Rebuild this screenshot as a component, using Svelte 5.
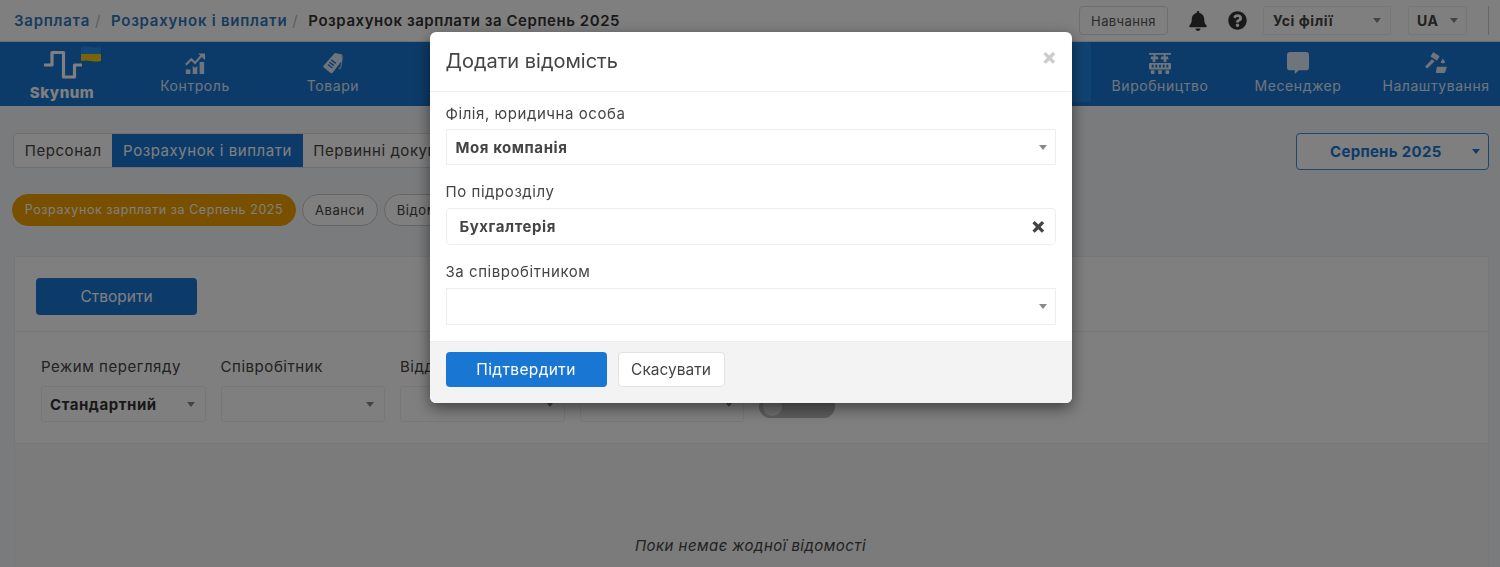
<script lang="ts">
    const navLeft = [
        { label: 'Контроль', icon: 'chart' },
        { label: 'Товари', icon: 'tag' }
    ];
    const navRight = [
        { label: 'Виробництво', icon: 'factory' },
        { label: 'Месенджер', icon: 'chat' },
        { label: 'Налаштування', icon: 'tools' }
    ];
    const filters = [
        { label: 'Режим перегляду', value: 'Стандартний' },
        { label: 'Співробітник', value: '' },
        { label: 'Відділ', value: '' },
        { label: 'Посада', value: '' }
    ];
</script>

{#snippet navIcon(name: string)}
    {#if name === 'chart'}
        <svg class="nav-icon" viewBox="0 0 24 24">
            <path d="M2 24v-5h5v5zM9.500 24v-9l2.500 2.500 2.500-2.500v9zM17 24V11h5v13z" />
            <path d="M2 14l6-6 4 4 7-8" fill="none" stroke="currentColor" stroke-width="2.400" />
            <path d="M15.500 1.500H23v7.500z" />
        </svg>
    {:else if name === 'tag'}
        <svg class="nav-icon" viewBox="0 0 24 24">
            <path fill-rule="evenodd" d="M14 1l7 1.500 1 6.500-10.500 13.500a1.500 1.500 0 0 1-2 .3L2 17a1.500 1.500 0 0 1-.3-2.100zM8.500 10.500l-.9 1.200 5 3.800.9-1.200zM6.800 13l-.9 1.200 5 3.800.9-1.200zM10.500 8l-.9 1.200 5 3.800.9-1.200z" />
            <path d="M19 4c2-3 3.500 0 3 3l-1.500 10c-.3 2-2 2-2 0" fill="none" stroke="currentColor" stroke-width="1" />
        </svg>
    {:else if name === 'factory'}
        <svg class="nav-icon" viewBox="0 0 24 24">
            <path d="M0 1h24v2H0zM5 3h2v2H5zM16 3h2v2h-2zM2.500 5h7l1 3H1.500zM13.500 5h7l1 3h-9zM4 8h3v3H4zM16 8h3v3h-3z" />
            <path fill-rule="evenodd" d="M1 12h22a1 1 0 0 1 1 1v5a1 1 0 0 1-1 1H1a1 1 0 0 1-1-1v-5a1 1 0 0 1 1-1zm2 2v3h2v-3zm4 0v3h2v-3zm4 0v3h2v-3zm4 0v3h2v-3zm4 0v3h2v-3z" />
            <path d="M2 20h4v2.500a1.500 1.500 0 0 1-4 0zM10 20h4v2.500a1.500 1.500 0 0 1-4 0zM18 20h4v2.500a1.500 1.500 0 0 1-4 0z" />
        </svg>
    {:else if name === 'chat'}
        <svg class="nav-icon" viewBox="0 0 24 24">
            <path d="M3.500 0h17A3.500 3.500 0 0 1 24 3.500v13a3.500 3.500 0 0 1-3.500 3.500H13l-4.500 4v-4h-5A3.500 3.500 0 0 1 0 16.500v-13A3.500 3.500 0 0 1 3.500 0z" />
        </svg>
    {:else}
        <svg class="nav-icon" viewBox="0 0 24 24">
            <path d="M9 0l7 4.500-3 5-7-4.500zM7.500 8l3 2L2.500 18 0 16z" />
            <path d="M19.500 7l2.500 4a2.800 2.800 0 0 1-5 0zM13 16h11l-2 6a2 2 0 0 1-1.500 1H13.500a1.500 1.500 0 0 1-1.500-2z" />
        </svg>
    {/if}
{/snippet}

{#snippet caret()}
    <span class="caret"></span>
{/snippet}

<div class="page">
    <header class="topbar">
        <nav class="crumbs">
            <a href="#a">Зарплата</a><span class="sep">/</span>
            <a href="#b">Розрахунок і виплати</a><span class="sep">/</span>
            <strong>Розрахунок зарплати за Серпень 2025</strong>
        </nav>
        <div class="top-actions">
            <button class="learn">Навчання</button>
            <svg class="bell" viewBox="0 0 448 512"><path d="M224 512c35.320 0 63.970-28.650 63.970-64H160.030c0 35.350 28.650 64 63.970 64zm215.390-149.710c-19.320-20.760-55.470-51.990-55.470-154.290 0-77.700-54.480-139.900-127.940-155.160V32c0-17.670-14.320-32-31.980-32s-31.980 14.330-31.980 32v20.840C118.560 68.100 64.080 130.300 64.080 208c0 102.300-36.150 133.530-55.470 154.290-6 6.450-8.660 14.160-8.610 21.710.11 16.400 12.980 32 32.100 32h383.800c19.120 0 32-15.600 32.100-32 .05-7.550-2.610-15.270-8.610-21.710z" /></svg>
            <svg class="help" viewBox="0 0 512 512"><path d="M504 256c0 136.997-111.043 248-248 248S8 392.997 8 256C8 119.083 119.043 8 256 8s248 111.083 248 248zM262.655 90c-54.497 0-89.255 22.957-116.549 63.758-3.536 5.286-2.353 12.415 2.715 16.258l34.699 26.310c5.205 3.947 12.621 3.008 16.665-2.122 17.864-22.658 30.113-35.797 57.303-35.797 20.429 0 45.698 13.148 45.698 32.958 0 14.976-12.363 22.667-32.534 33.976C247.128 238.528 216 254.941 216 296v4c0 6.627 5.373 12 12 12h56c6.627 0 12-5.373 12-12v-1.333c0-28.462 83.186-29.647 83.186-106.667 0-58.002-60.165-102-116.531-102zM256 338c-25.365 0-46 20.635-46 46 0 25.364 20.635 46 46 46s46-20.636 46-46c0-25.365-20.635-46-46-46z" /></svg>
            <div class="top-select branch"><b>Усі філії</b>{@render caret()}</div>
            <div class="top-select lang"><b>UA</b>{@render caret()}</div>
            <span class="top-divider"></span>
        </div>
    </header>

    <nav class="mainnav">
        <div class="logo">
            <svg class="logo-mark" viewBox="0 0 60 36">
                <path d="M3 20h8V7.500h11.500V32H33.500V20H41" fill="none" stroke="#fff" stroke-width="3.200" stroke-linejoin="round" />
                <path d="M40 2c7-2 13 2 20 0v7H40z" fill="#2590ee" />
                <path d="M40 9h20v7c-7 2-13-2-20 0z" fill="#f6c90e" />
            </svg>
            <span>Skynum</span>
        </div>
        {#each navLeft as item}
            <a class="nav-item" href="#n">{@render navIcon(item.icon)}<span>{item.label}</span></a>
        {/each}
        <span class="nav-fill"></span>
        <span class="nav-current"></span>
        {#each navRight as item}
            <a class="nav-item" href="#n">{@render navIcon(item.icon)}<span>{item.label}</span></a>
        {/each}
    </nav>

    <main class="content">
        <div class="tabs-row">
            <div class="tabs">
                <span class="tab">Персонал</span>
                <span class="tab active">Розрахунок і виплати</span>
                <span class="tab">Первинні документи</span>
            </div>
            <div class="period"><span>Серпень 2025</span><i></i></div>
        </div>

        <div class="pills">
            <span class="pill current">Розрахунок зарплати за Серпень 2025</span>
            <span class="pill">Аванси</span>
            <span class="pill">Відомості</span>
        </div>

        <section class="card">
            <div class="card-head">
                <button class="create">Створити</button>
            </div>
            <div class="filters">
                {#each filters as f}
                    <div class="filter">
                        <span class="filter-label">{f.label}</span>
                        <div class="filter-select"><b>{f.value}</b>{@render caret()}</div>
                    </div>
                {/each}
                <span class="toggle"><i></i></span>
            </div>
            <div class="empty">Поки немає жодної відомості</div>
        </section>
    </main>
</div>

<div class="overlay">
    <div class="modal">
        <div class="modal-head">
            <h2>Додати відомість</h2>
            <span class="close">×</span>
        </div>
        <div class="modal-body">
            <div class="field first">
                <span class="field-label">Філія, юридична особа</span>
                <div class="field-select square"><b>Моя компанія</b>{@render caret()}</div>
            </div>
            <div class="field">
                <span class="field-label">По підрозділу</span>
                <div class="field-select chosen"><b>Бухгалтерія</b><span class="clear">×</span></div>
            </div>
            <div class="field">
                <span class="field-label">За співробітником</span>
                <div class="field-select square"><b></b>{@render caret()}</div>
            </div>
        </div>
        <div class="modal-foot">
            <button class="confirm">Підтвердити</button>
            <button class="cancel">Скасувати</button>
        </div>
    </div>
</div>

<style>
    :global(body) {
        margin: 0;
        background: #f4f6f9;
        overflow: hidden;
    }

    .page {
        height: 567px;
        overflow: hidden;
        font-family: Inter, "Open Sans", sans-serif;
        letter-spacing: 0.035em;
        color: #444;
    }

    .topbar {
        height: 41px;
        background: #fff;
        border-bottom: 1px solid #ddd;
        display: flex;
        align-items: center;
        justify-content: space-between;
        padding-left: 14px;
    }

    .crumbs {
        font-size: 15px;
        font-weight: 600;
        display: flex;
        align-items: center;
        white-space: nowrap;
    }

    .crumbs a {
        color: #2c77bd;
        text-decoration: none;
        letter-spacing: 0.05em;
    }

    .crumbs strong {
        color: #333;
        font-weight: 600;
    }

    .sep {
        color: #bbb;
        font-weight: 400;
        margin: 0 10px 0 5px;
    }

    .top-actions {
        display: flex;
        align-items: center;
        height: 29px;
        padding-right: 11px;
    }

    .learn {
        width: 89px;
        height: 29px;
        background: #fff;
        border: 1px solid #ddd;
        border-radius: 4px;
        font: inherit;
        font-size: 13px;
        letter-spacing: 0.03em;
        color: #555;
        padding: 0;
    }

    .bell {
        width: 18px;
        height: 20px;
        margin-left: 21px;
        fill: #333;
    }

    .help {
        width: 19px;
        height: 19px;
        margin-left: 21px;
        fill: #333;
    }

    .top-select {
        height: 29px;
        box-sizing: border-box;
        border: 1px solid #eee;
        border-radius: 2px;
        display: flex;
        align-items: center;
        justify-content: space-between;
        font-size: 14px;
        color: #444;
    }

    .branch {
        width: 128px;
        margin-left: 16px;
        padding: 0 9px;
    }

    .lang {
        width: 59px;
        margin-left: 17px;
        padding: 0 8px;
    }

    .top-divider {
        width: 1px;
        height: 29px;
        background: #ccc;
        margin-left: 21px;
    }

    .caret {
        width: 0;
        height: 0;
        border-left: 4.500px solid transparent;
        border-right: 4.500px solid transparent;
        border-top: 5px solid #888;
    }

    .mainnav {
        height: 64px;
        background: #1976d2;
        display: flex;
        color: #fff;
        overflow: hidden;
    }

    .logo {
        width: 124px;
        margin-right: 2px;
        flex: none;
        display: flex;
        flex-direction: column;
        align-items: center;
        font-weight: 800;
        font-size: 15px;
    }

    .logo-mark {
        width: 60px;
        height: 36px;
        margin: 3px 0 0 18px;
    }

    .logo span {
        margin-top: 2px;
    }

    .nav-item {
        width: 138px;
        flex: none;
        display: flex;
        flex-direction: column;
        align-items: center;
        text-decoration: none;
        color: #fff;
        font-size: 14px;
        opacity: 0.85;
        white-space: nowrap;
    }

    .nav-item span {
        margin-top: 3px;
    }

    .nav-icon {
        width: 22px;
        height: 22px;
        margin-top: 10px;
        fill: currentColor;
    }

    .nav-fill {
        flex: 1;
    }

    /* sits behind the dialog, only its last 19px show */
    .nav-current {
        width: 138px;
        flex: none;
        height: 60px;
        background: #2287e4;
    }

    .nav-item:last-child {
        margin-right: -5px;
    }

    .content {
        padding: 27px 11px 0 12px;
    }

    .tabs-row {
        display: flex;
        justify-content: space-between;
        align-items: flex-start;
    }

    .tabs {
        display: flex;
        height: 35px;
        margin-left: 1px;
        box-sizing: border-box;
        border: 1px solid #ddd;
        border-radius: 4px;
        background: #fff;
        font-size: 15px;
    }

    .tab {
        padding: 0 10.700px;
        line-height: 33px;
        white-space: nowrap;
    }

    .tab.active {
        background: #1976d2;
        color: #fff;
    }

    .period {
        width: 193px;
        height: 37px;
        box-sizing: border-box;
        border: 1px solid #3f8fdc;
        border-radius: 4px;
        background: #fff;
        display: flex;
        align-items: center;
        color: #1976d2;
        font-weight: 700;
        font-size: 15px;
        letter-spacing: 0.02em;
        padding: 0 8px 0 33px;
        justify-content: space-between;
    }

    .period i {
        width: 0;
        height: 0;
        border-left: 4px solid transparent;
        border-right: 4px solid transparent;
        border-top: 5px solid #1976d2;
    }

    .pills {
        display: flex;
        gap: 6px;
        margin-top: 24px;
    }

    .pill {
        height: 32px;
        box-sizing: border-box;
        border: 1px solid #ccc;
        border-radius: 16px;
        padding: 0 12px;
        line-height: 30px;
        font-size: 13px;
        background: #fff;
        white-space: nowrap;
    }

    .pill.current {
        width: 284px;
        background: #f0a000;
        border-color: #f0a000;
        color: #fff;
        font-size: 12.500px;
        text-align: center;
        padding: 0;
    }

    .card {
        margin: 30px 0 0 2px;
        border: 1px solid #eee;
        background: #f6f6f6;
        height: 320px;
    }

    .card-head {
        height: 75px;
        background: #fff;
        border-bottom: 1px solid #eee;
        box-sizing: border-box;
        padding: 21px 0 0 21px;
    }

    .create {
        width: 161px;
        height: 37px;
        border: 0;
        border-radius: 4px;
        background: #1976d2;
        color: #fff;
        font: inherit;
        font-size: 15.500px;
        padding: 0;
    }

    .filters {
        height: 112px;
        background: #fff;
        border-bottom: 1px solid #eee;
        box-sizing: border-box;
        display: flex;
        gap: 15px;
        padding: 26px 0 0 26px;
    }

    .filter {
        width: 164.500px;
        display: flex;
        flex-direction: column;
    }

    .filter-label {
        font-size: 15px;
        line-height: 18px;
    }

    .filter-select {
        margin-top: 10px;
        height: 36px;
        box-sizing: border-box;
        border: 1px solid #eee;
        border-radius: 3px;
        display: flex;
        align-items: center;
        justify-content: space-between;
        padding: 0 10px 0 8px;
        font-size: 15px;
        color: #333;
    }

    .toggle {
        width: 76px;
        height: 23px;
        border-radius: 12px;
        background: #bbb;
        margin-top: 37px;
        position: relative;
    }

    .toggle i {
        position: absolute;
        left: 4px;
        top: 2px;
        width: 19px;
        height: 19px;
        border-radius: 50%;
        background: #ddd;
    }

    .empty {
        margin-top: 92px;
        text-align: center;
        font-style: italic;
        font-size: 15px;
        letter-spacing: 0.03em;
        color: #444;
        padding-right: 2px;
    }

    .overlay {
        position: fixed;
        inset: 0;
        background: rgba(0, 0, 0, 0.5);
        display: flex;
        justify-content: center;
        align-items: flex-start;
        padding: 32px 0 0 1px;
        box-sizing: border-box;
        font-family: Inter, "Open Sans", sans-serif;
        letter-spacing: 0.035em;
        color: #444;
    }

    .modal {
        width: 642px;
        height: 371px;
        background: #fff;
        border-radius: 6px;
        box-shadow: 0 5px 15px rgba(0, 0, 0, 0.5);
        overflow: hidden;
        display: flex;
        flex-direction: column;
    }

    .modal-head {
        height: 60px;
        flex: none;
        box-sizing: border-box;
        border-bottom: 1px solid #eee;
        display: flex;
        justify-content: space-between;
        padding: 0 14px 0 16px;
    }

    .modal-head h2 {
        margin: 17px 0 0;
        font-size: 20px;
        line-height: 24px;
        font-weight: 400;
        letter-spacing: 0;
        color: #444;
    }

    .close {
        font-size: 22px;
        font-weight: 800;
        color: #ccc;
        line-height: 22px;
        margin-top: 13px;
    }

    .modal-body {
        flex: 1;
        padding: 12px 16px 0;
        display: flex;
        flex-direction: column;
        gap: 18px;
    }

    .field {
        display: flex;
        flex-direction: column;
    }

    .field-label {
        font-size: 15px;
        line-height: 18px;
    }

    .field-select {
        margin-top: 7px;
        height: 37px;
        box-sizing: border-box;
        border: 1px solid #eee;
        display: flex;
        align-items: center;
        justify-content: space-between;
        padding: 0 8px 0 9px;
        font-size: 15px;
    }

    .field.first {
        padding-top: 1px;
    }

    .field.first .field-select {
        margin-top: 6px;
        height: 36px;
    }

    .field-select.chosen {
        border-radius: 4px;
        padding: 0 8px 0 13px;
    }

    .clear {
        font-size: 22px;
        font-weight: 800;
        color: #444;
        line-height: 22px;
        margin-top: -3px;
    }

    .modal-foot {
        height: 62px;
        flex: none;
        box-sizing: border-box;
        background: #f3f3f3;
        border-top: 1px solid #eee;
        display: flex;
        gap: 11px;
        padding: 10px 16px 0;
    }

    .confirm {
        width: 161px;
        height: 35px;
        border: 0;
        border-radius: 4px;
        background: #1976d2;
        color: #fff;
        font: inherit;
        font-size: 15.500px;
        letter-spacing: 0.025em;
        padding: 0;
    }

    .cancel {
        width: 107px;
        height: 35px;
        border: 1px solid #e2e2e2;
        border-radius: 4px;
        background: #fff;
        color: #444;
        font: inherit;
        font-size: 15.500px;
        padding: 0;
    }
</style>
